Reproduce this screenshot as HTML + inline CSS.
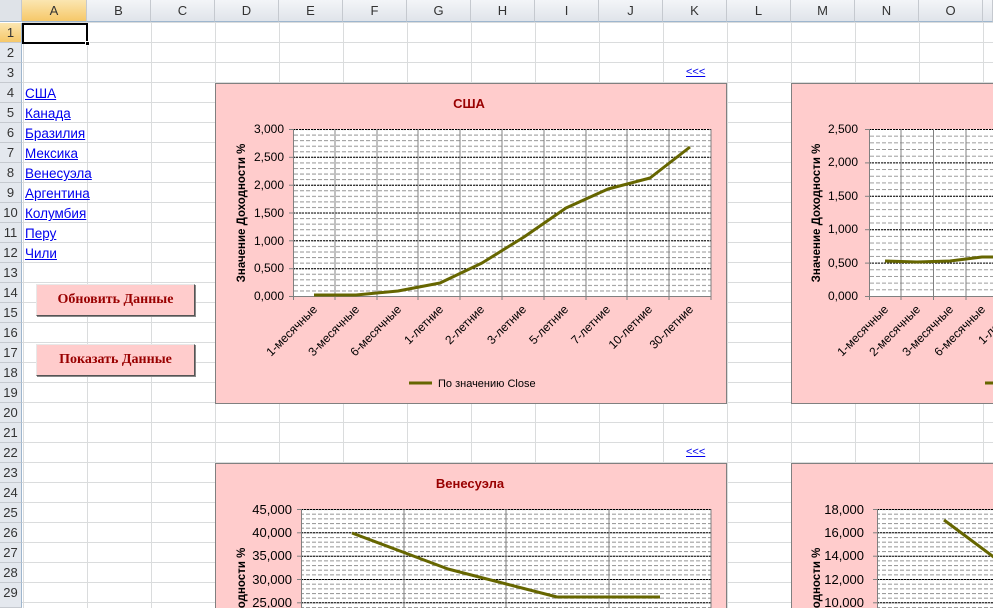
<!DOCTYPE html>
<html style="overflow:hidden;width:993px;height:608px"><head><meta charset="utf-8"><style>
*{margin:0;padding:0;box-sizing:border-box}
body{width:993px;height:608px;overflow:hidden;background:#fff;font-family:"Liberation Sans",sans-serif;position:relative}
.grid{position:absolute;left:22px;top:22px;width:971px;height:586px;
background-image:linear-gradient(to right,#dadcdd 1px,transparent 1px),linear-gradient(to bottom,#dadcdd 1px,transparent 1px);
background-size:64px 100%,100% 20px;background-position:1px 0,0 0}
.colh{position:absolute;top:0;height:22px;border-right:1px solid #c5c9cf;border-bottom:1px solid #9eb6ce;background:linear-gradient(#f3f5f8,#e0e4ea);font-size:13px;color:#333;text-align:center;line-height:22px}
.rowh{position:absolute;left:0;width:22px;height:20px;border-bottom:1px solid #c5c9cf;border-right:1px solid #9eb6ce;background:#e4e8ee;font-size:13px;color:#333;text-align:center;line-height:20px}
.sel{background:linear-gradient(#fbe6b1,#f6c869)!important}
.lnk{position:absolute;left:25px;font-size:13.5px;color:#0000ee;text-decoration:underline;line-height:20px}
.btn{position:absolute;left:36px;width:159px;height:32px;background:#ffcccc;border:1px solid;border-color:#e8e8e8 #555 #555 #e8e8e8;box-shadow:1px 1px 0 #888;font-family:"Liberation Serif",serif;font-weight:bold;font-size:14px;color:#990000;text-align:center;line-height:30px}
.bk{position:absolute;left:686px;font-size:11px;color:#0000ee;text-decoration:underline}
</style></head><body>
<div class="grid"></div>
<div class="colh" style="left:0;width:22px;background:#dfe3e8"></div>
<div class="colh sel" style="left:22px;width:65px">A</div>
<div class="colh" style="left:87px;width:64px">B</div>
<div class="colh" style="left:151px;width:64px">C</div>
<div class="colh" style="left:215px;width:64px">D</div>
<div class="colh" style="left:279px;width:64px">E</div>
<div class="colh" style="left:343px;width:64px">F</div>
<div class="colh" style="left:407px;width:64px">G</div>
<div class="colh" style="left:471px;width:64px">H</div>
<div class="colh" style="left:535px;width:64px">I</div>
<div class="colh" style="left:599px;width:64px">J</div>
<div class="colh" style="left:663px;width:64px">K</div>
<div class="colh" style="left:727px;width:64px">L</div>
<div class="colh" style="left:791px;width:64px">M</div>
<div class="colh" style="left:855px;width:64px">N</div>
<div class="colh" style="left:919px;width:64px">O</div>
<div class="colh" style="left:983px;width:10px"></div>
<div class="rowh sel" style="top:23px">1</div>
<div class="rowh" style="top:43px">2</div>
<div class="rowh" style="top:63px">3</div>
<div class="rowh" style="top:83px">4</div>
<div class="rowh" style="top:103px">5</div>
<div class="rowh" style="top:123px">6</div>
<div class="rowh" style="top:143px">7</div>
<div class="rowh" style="top:163px">8</div>
<div class="rowh" style="top:183px">9</div>
<div class="rowh" style="top:203px">10</div>
<div class="rowh" style="top:223px">11</div>
<div class="rowh" style="top:243px">12</div>
<div class="rowh" style="top:263px">13</div>
<div class="rowh" style="top:283px">14</div>
<div class="rowh" style="top:303px">15</div>
<div class="rowh" style="top:323px">16</div>
<div class="rowh" style="top:343px">17</div>
<div class="rowh" style="top:363px">18</div>
<div class="rowh" style="top:383px">19</div>
<div class="rowh" style="top:403px">20</div>
<div class="rowh" style="top:423px">21</div>
<div class="rowh" style="top:443px">22</div>
<div class="rowh" style="top:463px">23</div>
<div class="rowh" style="top:483px">24</div>
<div class="rowh" style="top:503px">25</div>
<div class="rowh" style="top:523px">26</div>
<div class="rowh" style="top:543px">27</div>
<div class="rowh" style="top:563px">28</div>
<div class="rowh" style="top:583px;height:25px">29</div>
<div style="position:absolute;left:22px;top:23px;width:66px;height:21px;border:2px solid #000"></div>
<div style="position:absolute;left:85px;top:41px;width:5px;height:5px;background:#000;border:1px solid #fff"></div>
<div class="lnk" style="top:84px">США</div>
<div class="lnk" style="top:104px">Канада</div>
<div class="lnk" style="top:124px">Бразилия</div>
<div class="lnk" style="top:144px">Мексика</div>
<div class="lnk" style="top:164px">Венесуэла</div>
<div class="lnk" style="top:184px">Аргентина</div>
<div class="lnk" style="top:204px">Колумбия</div>
<div class="lnk" style="top:224px">Перу</div>
<div class="lnk" style="top:244px">Чили</div>
<div class="btn" style="top:284px">Обновить Данные</div>
<div class="btn" style="top:344px">Показать Данные</div>
<div class="bk" style="top:66px">&lt;&lt;&lt;</div>
<div class="bk" style="top:446px">&lt;&lt;&lt;</div>
<svg width="993" height="608" viewBox="0 0 993 608" style="position:absolute;left:0;top:0;overflow:hidden" font-family="Liberation Sans,sans-serif" font-size="12">
<defs>
<pattern id="p1" patternUnits="userSpaceOnUse" x="0" y="129" width="993" height="5.567"><line x1="0" y1="0.5" x2="993" y2="0.5" stroke="#999" stroke-dasharray="4 2"/></pattern>
<pattern id="p2" patternUnits="userSpaceOnUse" x="0" y="129" width="993" height="6.68"><line x1="0" y1="0.5" x2="993" y2="0.5" stroke="#999" stroke-dasharray="4 2"/></pattern>
<pattern id="p3" patternUnits="userSpaceOnUse" x="0" y="509" width="993" height="4.667"><line x1="0" y1="0.5" x2="993" y2="0.5" stroke="#999" stroke-dasharray="4 2"/></pattern>
</defs>
<!-- chart 1 -->
<rect x="215.5" y="83.5" width="511" height="320" fill="#ffcccc" stroke="#808080"/>
<text x="469" y="108" text-anchor="middle" font-weight="bold" font-size="13" fill="#990000">США</text>
<rect x="293" y="129" width="418" height="167" fill="#fff"/>
<rect x="293" y="129" width="418" height="167" fill="url(#p1)"/>
<g stroke="#000" stroke-dasharray="2 1"><line x1="293" x2="711" y1="129.5" y2="129.5"/><line x1="293" x2="711" y1="157.3" y2="157.3"/><line x1="293" x2="711" y1="185.2" y2="185.2"/><line x1="293" x2="711" y1="213" y2="213"/><line x1="293" x2="711" y1="240.8" y2="240.8"/><line x1="293" x2="711" y1="268.7" y2="268.7"/></g>
<g stroke="#808080"><line x1="335" x2="335" y1="129" y2="300"/><line x1="377" x2="377" y1="129" y2="300"/><line x1="418" x2="418" y1="129" y2="300"/><line x1="460" x2="460" y1="129" y2="300"/><line x1="502" x2="502" y1="129" y2="300"/><line x1="544" x2="544" y1="129" y2="300"/><line x1="586" x2="586" y1="129" y2="300"/><line x1="627" x2="627" y1="129" y2="300"/><line x1="669" x2="669" y1="129" y2="300"/><line x1="711" x2="711" y1="129" y2="300"/><line x1="293.5" x2="293.5" y1="129" y2="300"/><line x1="289" x2="711" y1="296.5" y2="296.5"/>
<line x1="289" x2="293" y1="129.5" y2="129.5"/><line x1="289" x2="293" y1="157.3" y2="157.3"/><line x1="289" x2="293" y1="185.2" y2="185.2"/><line x1="289" x2="293" y1="213" y2="213"/><line x1="289" x2="293" y1="240.8" y2="240.8"/><line x1="289" x2="293" y1="268.7" y2="268.7"/></g>
<g text-anchor="end"><text x="284" y="133">3,000</text><text x="284" y="161">2,500</text><text x="284" y="189">2,000</text><text x="284" y="217">1,500</text><text x="284" y="245">1,000</text><text x="284" y="272">0,500</text><text x="284" y="300">0,000</text></g>
<text transform="translate(245,213) rotate(-90)" text-anchor="middle" font-weight="bold" font-size="11.5">Значение  Доходности %</text>
<polyline fill="none" stroke="#666600" stroke-width="3" stroke-linejoin="round" points="314,295 356,295 398,291 440,283 482,263 524,237 566,208 608,189 650,178 690,147"/>
<g text-anchor="end"><text transform="translate(318,310) rotate(-45)">1-месячные</text><text transform="translate(360,310) rotate(-45)">3-месячные</text><text transform="translate(402,310) rotate(-45)">6-месячные</text><text transform="translate(444,310) rotate(-45)">1-летние</text><text transform="translate(485,310) rotate(-45)">2-летние</text><text transform="translate(527,310) rotate(-45)">3-летние</text><text transform="translate(569,310) rotate(-45)">5-летние</text><text transform="translate(611,310) rotate(-45)">7-летние</text><text transform="translate(653,310) rotate(-45)">10-летние</text><text transform="translate(694,310) rotate(-45)">30-летние</text></g>
<line x1="409" x2="432" y1="383" y2="383" stroke="#666600" stroke-width="3"/>
<text x="438" y="387" font-size="11">По значению Close</text>
<!-- chart 2 -->
<rect x="791.5" y="83.5" width="300" height="320" fill="#ffcccc" stroke="#808080"/>
<rect x="869" y="129" width="130" height="167" fill="#fff"/>
<rect x="869" y="129" width="130" height="167" fill="url(#p2)"/>
<g stroke="#000" stroke-dasharray="2 1"><line x1="869" x2="993" y1="129.5" y2="129.5"/><line x1="869" x2="993" y1="162.9" y2="162.9"/><line x1="869" x2="993" y1="196.3" y2="196.3"/><line x1="869" x2="993" y1="229.7" y2="229.7"/><line x1="869" x2="993" y1="263.1" y2="263.1"/></g>
<g stroke="#808080"><line x1="869.5" x2="869.5" y1="129" y2="300"/><line x1="901" x2="901" y1="129" y2="300"/><line x1="933.5" x2="933.5" y1="129" y2="300"/><line x1="966" x2="966" y1="129" y2="300"/><line x1="865" x2="993" y1="296.5" y2="296.5"/>
<line x1="865" x2="869" y1="129.5" y2="129.5"/><line x1="865" x2="869" y1="162.9" y2="162.9"/><line x1="865" x2="869" y1="196.3" y2="196.3"/><line x1="865" x2="869" y1="229.7" y2="229.7"/><line x1="865" x2="869" y1="263.1" y2="263.1"/></g>
<g text-anchor="end"><text x="858" y="133">2,500</text><text x="858" y="166">2,000</text><text x="858" y="200">1,500</text><text x="858" y="233">1,000</text><text x="858" y="267">0,500</text><text x="858" y="300">0,000</text></g>
<text transform="translate(820,213) rotate(-90)" text-anchor="middle" font-weight="bold" font-size="11.5">Значение  Доходности %</text>
<polyline fill="none" stroke="#666600" stroke-width="3" stroke-linejoin="round" points="885,261 917,262 950,261 982,257 995,257"/>
<g text-anchor="end"><text transform="translate(889,310) rotate(-45)">1-месячные</text><text transform="translate(921,310) rotate(-45)">2-месячные</text><text transform="translate(954,310) rotate(-45)">3-месячные</text><text transform="translate(986,310) rotate(-45)">6-месячные</text><text transform="translate(1018,310) rotate(-45)">1-летние</text></g>
<line x1="985" x2="995" y1="383" y2="383" stroke="#666600" stroke-width="3"/>
<!-- chart 3 -->
<rect x="215.5" y="463.5" width="511" height="200" fill="#ffcccc" stroke="#808080"/>
<text x="470" y="488" text-anchor="middle" font-weight="bold" font-size="13" fill="#990000">Венесуэла</text>
<rect x="301" y="509" width="410" height="100" fill="#fff"/>
<rect x="301" y="509" width="410" height="100" fill="url(#p3)"/>
<g stroke="#000" stroke-dasharray="2 1"><line x1="301" x2="711" y1="509.5" y2="509.5"/><line x1="301" x2="711" y1="532.8" y2="532.8"/><line x1="301" x2="711" y1="556.2" y2="556.2"/><line x1="301" x2="711" y1="579.5" y2="579.5"/><line x1="301" x2="711" y1="602.8" y2="602.8"/></g>
<g stroke="#808080"><line x1="301.5" x2="301.5" y1="509" y2="608"/><line x1="404" x2="404" y1="509" y2="608"/><line x1="506" x2="506" y1="509" y2="608"/><line x1="609" x2="609" y1="509" y2="608"/><line x1="711" x2="711" y1="509" y2="608"/>
<line x1="297" x2="301" y1="509.5" y2="509.5"/><line x1="297" x2="301" y1="532.8" y2="532.8"/><line x1="297" x2="301" y1="556.2" y2="556.2"/><line x1="297" x2="301" y1="579.5" y2="579.5"/><line x1="297" x2="301" y1="602.8" y2="602.8"/></g>
<g text-anchor="end" font-size="13"><text x="292" y="514">45,000</text><text x="292" y="537">40,000</text><text x="292" y="560">35,000</text><text x="292" y="584">30,000</text><text x="292" y="607">25,000</text></g>
<text transform="translate(245,617) rotate(-90)" text-anchor="middle" font-weight="bold" font-size="11.5">Значение  Доходности %</text>
<polyline fill="none" stroke="#666600" stroke-width="3" stroke-linejoin="round" points="352,533 400,551 448,569 557,597 660,597"/>
<!-- chart 4 -->
<rect x="791.5" y="463.5" width="300" height="200" fill="#ffcccc" stroke="#808080"/>
<rect x="877" y="509" width="120" height="100" fill="#fff"/>
<rect x="877" y="509" width="120" height="100" fill="url(#p3)"/>
<g stroke="#000" stroke-dasharray="2 1"><line x1="877" x2="993" y1="509.5" y2="509.5"/><line x1="877" x2="993" y1="532.8" y2="532.8"/><line x1="877" x2="993" y1="556.2" y2="556.2"/><line x1="877" x2="993" y1="579.5" y2="579.5"/><line x1="877" x2="993" y1="602.8" y2="602.8"/></g>
<g stroke="#808080"><line x1="877.5" x2="877.5" y1="509" y2="608"/><line x1="873" x2="877" y1="509.5" y2="509.5"/><line x1="873" x2="877" y1="532.8" y2="532.8"/><line x1="873" x2="877" y1="556.2" y2="556.2"/><line x1="873" x2="877" y1="579.5" y2="579.5"/><line x1="873" x2="877" y1="602.8" y2="602.8"/></g>
<g text-anchor="end" font-size="13"><text x="864" y="514">18,000</text><text x="864" y="537">16,000</text><text x="864" y="560">14,000</text><text x="864" y="584">12,000</text><text x="864" y="607">10,000</text></g>
<text transform="translate(820,617) rotate(-90)" text-anchor="middle" font-weight="bold" font-size="11.5">Значение  Доходности %</text>
<polyline fill="none" stroke="#666600" stroke-width="3" points="944,520 995,558"/>
</svg>
</body></html>
